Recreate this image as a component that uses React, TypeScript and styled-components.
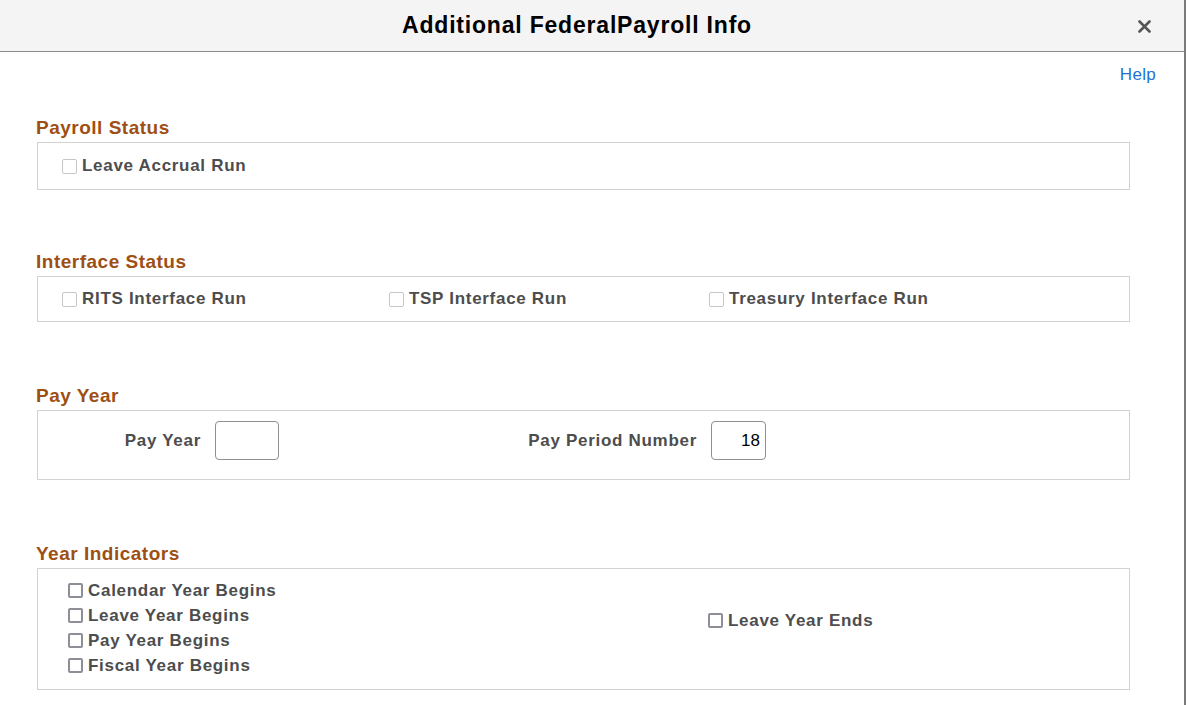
import styled, { createGlobalStyle } from "styled-components";

const GlobalStyle = createGlobalStyle`
  body {
    margin: 0;
    background: #ffffff;
    font-family: "Liberation Sans", Arial, sans-serif;
  }
`;

const Dialog = styled.div`
  width: 1184px;
  height: 705px;
  border-right: 2px solid #7a7a7a;
  background: #ffffff;
  overflow: hidden;
`;

const Header = styled.div`
  position: relative;
  height: 51px;
  background: #f4f4f4;
  border-bottom: 1px solid #8c8c8c;
  display: flex;
  align-items: center;
  justify-content: center;
  padding-right: 30px;
`;

const Title = styled.h1`
  margin: 0;
  font-size: 23px;
  font-weight: bold;
  letter-spacing: 0.8px;
  color: #000;
`;

const CloseButton = styled.button`
  position: absolute;
  right: 32px;
  top: 18px;
  width: 16px;
  height: 16px;
  padding: 0;
  border: none;
  background: transparent;
  display: flex;
  align-items: center;
  justify-content: center;
  cursor: pointer;
`;

const Body = styled.div`
  padding: 0 54px 0 36px;
`;

const HelpRow = styled.div`
  display: flex;
  justify-content: flex-end;
  padding-top: 12px;
  margin-right: -26px;
  height: 21px;
  margin-bottom: 32px;
`;

const HelpLink = styled.a`
  font-size: 17px;
  line-height: 21px;
  color: #2173d2;
  letter-spacing: 0.3px;
  cursor: pointer;
`;

const Section = styled.section<{ $gap?: number }>`
  margin-top: ${(p) => p.$gap || 0}px;
`;

const SectionTitle = styled.h2`
  margin: 0 0 3px 0;
  font-size: 19px;
  line-height: 22px;
  font-weight: bold;
  letter-spacing: 0.5px;
  color: #9e4f14;
`;

const Box = styled.div`
  margin-left: 1px;
  border: 1px solid #d2d2d2;
`;

const CheckRow = styled.div<{ $cols: string; $height: number }>`
  display: grid;
  grid-template-columns: ${(p) => p.$cols};
  align-items: center;
  height: ${(p) => p.$height}px;
  padding-left: 24px;
`;

const CheckLabel = styled.label<{ $height?: number }>`
  display: flex;
  align-items: center;
  gap: 5px;
  height: ${(p) => p.$height || 22}px;
  font-size: 17px;
  font-weight: bold;
  letter-spacing: 0.7px;
  color: #4d4d4d;
`;

const CheckBox = styled.span<{ $strong?: boolean }>`
  flex: none;
  width: ${(p) => (p.$strong ? 11 : 13)}px;
  height: ${(p) => (p.$strong ? 11 : 13)}px;
  border: ${(p) => (p.$strong ? "2px solid #8e8e99" : "1px solid #c6c6c6")};
  border-radius: 2px;
  background: #fff;
`;

const FieldRow = styled.div`
  display: flex;
  align-items: center;
  padding: 10px 0 19px 0;
`;

const FieldLabel = styled.span<{ $width: number; $offset?: number }>`
  box-sizing: border-box;
  width: ${(p) => p.$width}px;
  margin-left: ${(p) => p.$offset || 0}px;
  text-align: right;
  font-size: 17px;
  font-weight: bold;
  letter-spacing: 0.7px;
  color: #4d4d4d;
  padding-right: 14px;
`;

const TextInput = styled.input<{ $width: number }>`
  box-sizing: border-box;
  width: ${(p) => p.$width}px;
  height: 39px;
  border: 1px solid #8f8f8f;
  border-radius: 4px;
  padding: 0 5px;
  font-family: "Liberation Sans", Arial, sans-serif;
  font-size: 17px;
  color: #000;
  text-align: right;
  outline: none;
`;

const IndicatorGrid = styled.div`
  display: grid;
  grid-template-columns: 640px 1fr;
  padding: 9px 0 11px 30px;
`;

const Column = styled.div<{ $top?: number }>`
  display: flex;
  flex-direction: column;
  padding-top: ${(p) => p.$top || 0}px;
`;

const Check = ({
  label,
  strong,
  height,
}: {
  label: string;
  strong?: boolean;
  height?: number;
}) => (
  <CheckLabel $height={height}>
    <CheckBox $strong={strong} />
    {label}
  </CheckLabel>
);

const App = () => {
  return (
    <>
      <GlobalStyle />
      <Dialog>
        <Header>
          <Title>Additional FederalPayroll Info</Title>
          <CloseButton aria-label="Close">
            <svg width="13" height="13" viewBox="0 0 13 13">
              <path
                d="M1.5 1.5 L11.5 11.5 M11.5 1.5 L1.5 11.5"
                stroke="#555"
                strokeWidth="2.6"
                strokeLinecap="round"
              />
            </svg>
          </CloseButton>
        </Header>
        <Body>
          <HelpRow>
            <HelpLink>Help</HelpLink>
          </HelpRow>

          <Section>
            <SectionTitle>Payroll Status</SectionTitle>
            <Box>
              <CheckRow $cols="1fr" $height={46}>
                <Check label="Leave Accrual Run" />
              </CheckRow>
            </Box>
          </Section>

          <Section $gap={61}>
            <SectionTitle>Interface Status</SectionTitle>
            <Box>
              <CheckRow $cols="327px 320px 1fr" $height={44}>
                <Check label="RITS Interface Run" />
                <Check label="TSP Interface Run" />
                <Check label="Treasury Interface Run" />
              </CheckRow>
            </Box>
          </Section>

          <Section $gap={63}>
            <SectionTitle>Pay Year</SectionTitle>
            <Box>
              <FieldRow>
                <FieldLabel $width={177}>Pay Year</FieldLabel>
                <TextInput $width={64} defaultValue="" />
                <FieldLabel $width={232} $offset={200}>
                  Pay Period Number
                </FieldLabel>
                <TextInput $width={55} defaultValue="18" />
              </FieldRow>
            </Box>
          </Section>

          <Section $gap={63}>
            <SectionTitle>Year Indicators</SectionTitle>
            <Box>
              <IndicatorGrid>
                <Column>
                  <Check strong height={25} label="Calendar Year Begins" />
                  <Check strong height={25} label="Leave Year Begins" />
                  <Check strong height={25} label="Pay Year Begins" />
                  <Check strong height={25} label="Fiscal Year Begins" />
                </Column>
                <Column $top={30}>
                  <Check strong height={25} label="Leave Year Ends" />
                </Column>
              </IndicatorGrid>
            </Box>
          </Section>
        </Body>
      </Dialog>
    </>
  );
};

export default App;
